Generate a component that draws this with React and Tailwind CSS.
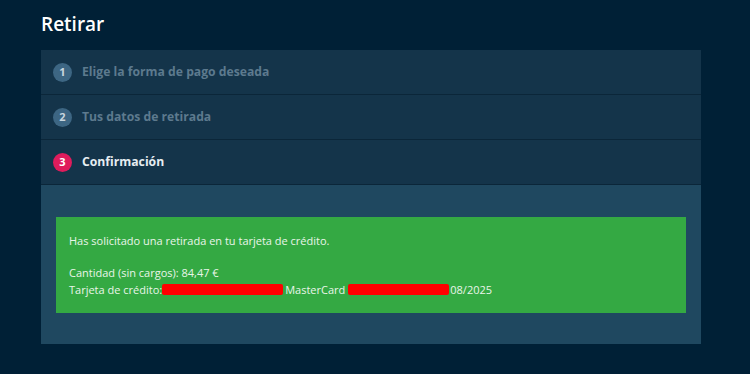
import React from 'react';

const steps = [
    { n: 1, label: 'Elige la forma de pago deseada', active: false },
    { n: 2, label: 'Tus datos de retirada', active: false },
    { n: 3, label: 'Confirmación', active: true },
];

const StepRow = ({ n, label, active }) => (
    <div className="h-[45px] flex items-center px-3 bg-[#14344a] border-b border-[#0b2639]">
        <span
            className={
                active
                    ? 'w-[19px] h-[19px] rounded-full bg-[#df1c5c] text-white text-[11px] font-bold flex items-center justify-center'
                    : 'w-[19px] h-[19px] rounded-full bg-[#3d6683] text-[#c9d6df] text-[11px] font-bold flex items-center justify-center'
            }
        >
            {n}
        </span>
        <span
            className={
                active
                    ? 'ml-[10px] text-[12.2px] font-bold text-[#e6edf2]'
                    : 'ml-[10px] text-[12.2px] font-bold text-[#5d7a8e]'
            }
        >
            {label}
        </span>
    </div>
);

const Redacted = ({ w }) => (
    <span className="inline-block h-[11px] bg-[#ff0000] rounded-[2px] align-[-1px]" style={{ width: w }} />
);

export default function App() {
    return (
        <div
            className="w-[750px] h-[374px] bg-[#002036] px-[41px] pt-[12px]"
            style={{ fontFamily: '"Open Sans", "Noto Sans", sans-serif' }}
        >
            <h1 className="text-[19px] font-semibold text-white leading-[24px] h-[38px]">Retirar</h1>
            <div className="w-[660px]">
                {steps.map((s) => (
                    <StepRow key={s.n} {...s} />
                ))}
                <div className="bg-[#1f4860] px-[15px] pt-[32px] pb-[31px]">
                    <div className="bg-[#34a943] h-[96px] px-[13px] pt-[15px] text-[11px] leading-[17px] text-[#e9f5e9]">
                        <p>Has solicitado una retirada en tu tarjeta de crédito.</p>
                        <p className="mt-[15px]">Cantidad (sin cargos): 84,47 €</p>
                        <p className="flex items-center">
                            <span>Tarjeta de crédito:</span>
                            <Redacted w={121} />
                            <span className="ml-[2px]">MasterCard</span>
                            <span className="ml-[3px]"><Redacted w={101} /></span>
                            <span className="ml-[1px]">08/2025</span>
                        </p>
                    </div>
                </div>
            </div>
        </div>
    );
}
